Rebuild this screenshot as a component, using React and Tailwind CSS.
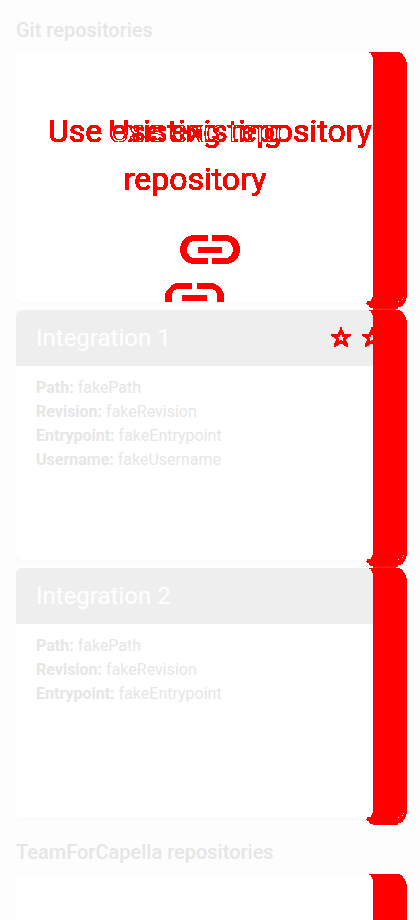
const LINK_PATH =
  "M28 0H14.500a14.500 14.500 0 0 0 0 29H28v-6H14.500a7.500 8.500 0 0 1 0-17H28zM18 12h24v6H18zM32 0h13.500a14.500 14.500 0 0 1 0 29H32v-6h13.500a7.500 8.500 0 0 0 0-17H32z";

function LinkIcon() {
  return (
    <svg width="60" height="29" viewBox="0 0 60 29" fill="#f00" shapeRendering="crispEdges">
      <path d={LINK_PATH} />
    </svg>
  );
}

function ClippedLinkIcon() {
  return (
    <svg width="59" height="19" viewBox="0 0 59 19" fill="#f00" shapeRendering="crispEdges">
      <path d="M27 0H10V1H8V2H6V3L2 7V8H1V10H0V19H7V13C7 9 9 6 13 6H27zM17 12H42V18H17zM32 0H49V1H51V2H53V3L57 7V8H58V10H59V19H52V13C52 9 50 6 46 6H32z" />
    </svg>
  );
}

function Star() {
  return (
    <svg width="20" height="20" viewBox="0 0 20 20" fill="#f00" fillRule="evenodd" shapeRendering="crispEdges">
      <path d="M9 0H11V3H12V5H13V7H20V9H19V10H17V11H16V12H15V14H16V16H17V20H15V19H13V18H12V17H8V18H7V19H5V20H3V16H4V14H5V12H4V11H3V10H1V9H0V7H7V5H8V3H9zM9 8V10H7V11H8V14H9V13H11V14H12V11H13V10H11V8z" />
    </svg>
  );
}

function Strip({ joined }) {
  return (
    <svg className="absolute top-0 left-[350px]" width="42" height="258" viewBox="0 0 42 258" fill="#f00" fillRule="evenodd" shapeRendering="crispEdges">
      <path d="M3 0H34V1H36V2H37V4H38V5H39V7H40V10H41V246H40V249H39V251H38V252H37V254H35V255H32V257H7V256H4V255H3V253H1V252H0V251H1V249H5V247H6V245H7V5H6V3H5V1H3zM37 245h1v1h-1zM36 247h1v1h-1zM32 249h1v1h-1z" />
      {joined && <path d="M7 257h23v1H7z" />}
    </svg>
  );
}

function Card({ children, joined }) {
  return (
    <section className="relative h-[250px] w-[388px] shrink-0">
      <div className="h-full overflow-hidden rounded-md bg-white shadow-[0_2px_4px_#f9f9f9]">{children}</div>
      <Strip joined={joined} />
    </section>
  );
}

function Field({ label, value }) {
  return (
    <p>
      <b className="font-bold">{label}:</b> {value}
    </p>
  );
}

function Integration({ title, fields, stars, joined }) {
  return (
    <Card joined={joined}>
      <header className="flex h-14 items-center justify-between bg-[#eeeeee] px-5">
        <h2 className="text-2xl text-white">{title}</h2>
        {stars && (
          <div className="-mr-[9px] flex gap-[11px] pr-[11px] pb-0.5">
            <Star />
            <Star />
          </div>
        )}
      </header>
      <div className="px-5 py-[10px] text-base leading-6">
        {fields.map(([label, value]) => (
          <Field key={label} label={label} value={value} />
        ))}
      </div>
    </Card>
  );
}

function ExistingRepository() {
  return (
    <Card joined>
      <div className="relative h-full bg-white filter-[url(#crisp)]">
        <div className="flex flex-col items-center pt-[55px] text-[32px] leading-[48px] font-normal text-[#0ff]">
          <p className="whitespace-nowrap mix-blend-difference">Use existing repository</p>
        </div>
        <div className="absolute top-[55px] left-0 w-[358px] text-center text-[32px] leading-[48px] font-normal text-[#0ff] mix-blend-difference">
          Use existing
          <br />
          repository
        </div>
        <div className="absolute top-[183px] left-[164px]">
          <LinkIcon />
        </div>
        <div className="absolute top-[231px] left-[149px]">
          <ClippedLinkIcon />
        </div>
      </div>
    </Card>
  );
}

export default function App() {
  return (
    <main className="h-[920px] w-[420px] overflow-hidden bg-[#fdfdfd] px-4 font-[Roboto,sans-serif] text-[#e6e6e6]">
      <svg width="0" height="0" className="absolute">
        <filter id="crisp" x="0" y="0" width="1" height="1" colorInterpolationFilters="sRGB">
          <feComponentTransfer>
            <feFuncG type="discrete" tableValues="0 0 0 0 0 0 0 0 0 0 0 0 0 0 0 0 0 0 0 0 0 0 0 0 1" />
            <feFuncB type="discrete" tableValues="0 0 0 0 0 0 0 0 0 0 0 0 0 0 0 0 0 0 0 0 0 0 0 0 1" />
            <feFuncR type="discrete" tableValues="1 1" />
          </feComponentTransfer>
        </filter>
      </svg>
      <h1 className="pt-4 pb-2 text-xl leading-7 font-medium">Git repositories</h1>
      <div className="flex flex-col gap-2">
        <ExistingRepository />
        <Integration
          title="Integration 1"
          stars
          joined
          fields={[
            ["Path", "fakePath"],
            ["Revision", "fakeRevision"],
            ["Entrypoint", "fakeEntrypoint"],
            ["Username", "fakeUsername"],
          ]}
        />
        <Integration
          title="Integration 2"
          fields={[
            ["Path", "fakePath"],
            ["Revision", "fakeRevision"],
            ["Entrypoint", "fakeEntrypoint"],
          ]}
        />
      </div>
      <h1 className="pt-5 pb-2 text-xl leading-7 font-medium">TeamForCapella repositories</h1>
      <Card />
    </main>
  );
}
